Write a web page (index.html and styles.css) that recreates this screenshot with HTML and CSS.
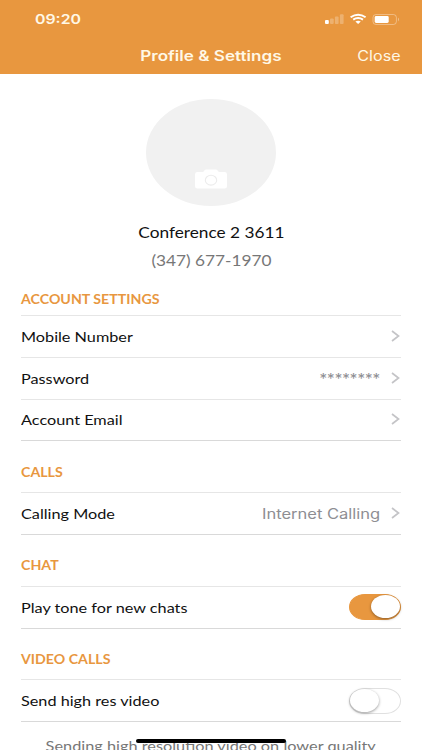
FILE: index.html
```
<!DOCTYPE html>
<html lang="en">
<head>
<meta charset="UTF-8">
<meta name="viewport" content="width=device-width, initial-scale=1.0">
<title>Profile &amp; Settings</title>
<link rel="stylesheet" href="styles.css">
</head>
<body>
<header>
    <div class="status-bar">
        <span class="time">09:20</span>
        <svg class="status-icons" width="78" height="16" viewBox="0 0 78 16">
            <g fill="#fff">
                <rect x="2" y="9" width="3.8" height="4" rx="1"/>
                <g opacity=".25">
                    <rect x="7" y="7.5" width="3.7" height="5.5" rx="1"/>
                    <rect x="11.9" y="5.5" width="3.7" height="7.5" rx="1"/>
                    <rect x="16.9" y="3.3" width="3.7" height="9.7" rx="1"/>
                </g>
                <path d="M32.4 10.6 Q35.1 8.9 37.8 10.6 L35.1 13 Z"/>
            </g>
            <path d="M27.6 6.3 Q35.1 1 42.6 6.3 M30.2 8.7 Q35.1 5.4 40 8.7" fill="none" stroke="#fff" stroke-width="2"/>
            <rect x="50" y="3.5" width="23.4" height="10" rx="3" fill="none" stroke="#fff" opacity=".35"/>
            <rect x="51.7" y="5" width="14" height="7" rx="1.4" fill="#fff"/>
            <path d="M75 6.6 Q77.1 8.4 75 10.4 Z" fill="#fff" opacity=".4"/>
        </svg>
    </div>
    <div class="nav-bar">
        <h1>Profile &amp; Settings</h1>
        <span class="close">Close</span>
    </div>
</header>

<div class="profile">
    <div class="avatar">
        <svg width="32" height="20" viewBox="0 0 32 20">
            <path d="M2.5 3 H7.5 Q8.5 3 9 2 Q9.6 .5 11 .5 H21 Q22.4 .5 23 2 Q23.5 3 24.5 3 H29.5 Q32 3 32 5.2 V17.3 Q32 19.5 29.5 19.5 H2.5 Q0 19.5 0 17.3 V5.2 Q0 3 2.5 3 Z" fill="#fff"/>
            <ellipse cx="16" cy="11.2" rx="5.7" ry="4.9" fill="none" stroke="#ececec" stroke-width="1.1"/>
        </svg>
    </div>
    <div class="name"><span>Conference 2 3611</span></div>
    <div class="phone"><span>(347) 677-1970</span></div>
</div>

<section class="account">
    <h2><span>ACCOUNT SETTINGS</span></h2>
    <div class="row">
        <span class="label">Mobile Number</span>
        <svg class="chevron" width="9" height="12" viewBox="0 0 9 12"><path d="M1 1 L7.5 6 L1 11"/></svg>
    </div>
    <div class="row">
        <span class="label">Password</span>
        <span class="value stars">********</span>
        <svg class="chevron" width="9" height="12" viewBox="0 0 9 12"><path d="M1 1 L7.5 6 L1 11"/></svg>
    </div>
    <div class="row">
        <span class="label">Account Email</span>
        <svg class="chevron" width="9" height="12" viewBox="0 0 9 12"><path d="M1 1 L7.5 6 L1 11"/></svg>
    </div>
</section>

<section>
    <h2><span>CALLS</span></h2>
    <div class="row">
        <span class="label">Calling Mode</span>
        <span class="value">Internet Calling</span>
        <svg class="chevron" width="9" height="12" viewBox="0 0 9 12"><path d="M1 1 L7.5 6 L1 11"/></svg>
    </div>
</section>

<section>
    <h2><span>CHAT</span></h2>
    <div class="row">
        <span class="label">Play tone for new chats</span>
        <span class="switch on"><i></i></span>
    </div>
</section>

<section>
    <h2><span>VIDEO CALLS</span></h2>
    <div class="row">
        <span class="label">Send high res video</span>
        <span class="switch"><i></i></span>
    </div>
    <p><span>Sending high resolution video on lower quality</span></p>
</section>

<div class="home-indicator"></div>
</body>
</html>
```
FILE: styles.css
```
* {
    box-sizing: border-box;
}
body {
    font-family: Lato, sans-serif;
    margin: 0;
    height: 750px;
    overflow: hidden;
    position: relative;
    background-color: #fff;
    color: #111;
}
span {
    display: inline-block;
    white-space: nowrap;
}

header {
    height: 74px;
    background-color: #e8973f;
    color: #fff8e6;
    font-family: Inter, sans-serif;
}
.status-bar {
    display: flex;
    justify-content: space-between;
    height: 37px;
    padding: 11px 21px 0 35px;
}
.time {
    font-size: 13px;
    font-weight: 600;
    line-height: 17px;
    transform: scaleX(1.22);
    transform-origin: left;
}
.nav-bar {
    display: grid;
    grid-template-columns: 1fr auto 1fr;
    align-items: center;
    height: 37px;
    padding: 0 21px;
}
h1 {
    grid-column: 2;
    margin: 0;
    font-size: 14px;
    font-weight: 600;
    transform: scaleX(1.22);
}
.close {
    justify-self: end;
    font-size: 14px;
    transform: scaleX(1.15);
    transform-origin: right;
}

.profile {
    display: flex;
    flex-direction: column;
    align-items: center;
    height: 210px;
    padding-top: 25px;
}
.avatar {
    display: flex;
    justify-content: center;
    align-items: flex-end;
    width: 130px;
    height: 107px;
    padding-bottom: 17px;
    border-radius: 50%;
    background-color: #f1f1f1;
}
.name {
    margin-top: 17px;
    font-size: 14.5px;
    line-height: 20px;
}
.phone {
    margin-top: 8px;
    font-size: 14.5px;
    line-height: 20px;
    color: #777;
}
.name span, .phone span {
    transform: scaleX(1.19);
}

section {
    margin: 0 21px;
}
h2 {
    margin: 0;
    height: 51.8px;
    padding-top: 23.5px;
    border-bottom: 1px solid #e6e6e6;
    color: #e8973f;
    font-size: 12.5px;
    line-height: 16px;
}
.account h2 {
    height: 32px;
    padding-top: 8px;
}
h2 span {
    transform: scaleX(1.135);
    transform-origin: left;
}
.row {
    display: flex;
    align-items: center;
    height: 41.8px;
    border-bottom: 1px solid #e6e6e6;
}
.row:last-of-type {
    border-bottom-color: #d9d9d9;
}
.label {
    margin-right: auto;
    font-size: 14px;
    transform: scaleX(1.16);
    transform-origin: left;
}
.value {
    font-family: Inter, sans-serif;
    font-size: 14px;
    color: #8e8e93;
    transform: scaleX(1.18);
    transform-origin: right;
}
.stars {
    transform: scaleX(1.08);
}
.chevron {
    margin-left: 11px;
    margin-right: 1px;
    margin-bottom: 1px;
    fill: none;
    stroke: #c4c4c7;
    stroke-width: 1.7;
}

.switch {
    width: 52px;
    height: 26px;
    border: 1.5px solid #e0e0e0;
    border-radius: 16px / 13px;
}
.switch i {
    display: block;
    width: 29px;
    height: 23px;
    border-radius: 50%;
    background-color: #fff;
    box-shadow: 0 1px 3px rgba(0, 0, 0, .4);
}
.switch.on {
    border-color: #e8973f;
    background-color: #e8973f;
}
.switch.on i {
    margin-left: auto;
}

p {
    margin: 14px 0 0;
    text-align: center;
    font-size: 14px;
    line-height: 20px;
    color: #777;
}
p span {
    transform: scaleX(1.165);
}
/* sits over the scrolling content */
.home-indicator {
    position: absolute;
    left: 136px;
    bottom: 7px;
    width: 150px;
    height: 4px;
    border-radius: 2px;
    background-color: #000;
}
```
